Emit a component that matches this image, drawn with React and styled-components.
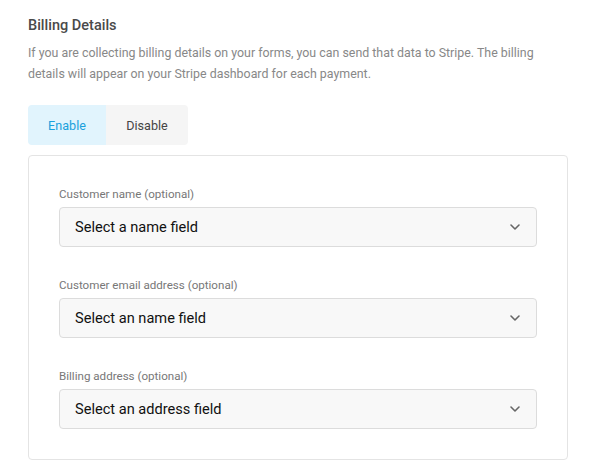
import React, { useState } from 'react'
import styled, { createGlobalStyle } from 'styled-components'

const GlobalStyle = createGlobalStyle`
  body {
    margin: 0;
    background: #fff;
    font-family: Roboto, "Liberation Sans", sans-serif;
  }
`

const Page = styled.div`
  padding: 16px 30px 15px 28px;
  width: 540px;
`

const Title = styled.h3`
  margin: 0;
  font-size: 14.5px;
  font-weight: 500;
  color: #4a4a4a;
  line-height: 20px;
`

const Intro = styled.p`
  margin: 6px 0 0;
  font-size: 12.4px;
  line-height: 21px;
  color: #888;
`

const Tabs = styled.div`
  display: inline-flex;
  margin-top: 21px;
  border-radius: 4px;
  overflow: hidden;
`

const Tab = styled.button`
  height: 40px;
  width: ${p => p.$w}px;
  padding: 0;
  border: 0;
  font-family: inherit;
  font-size: 12.6px;
  background: ${p => (p.$active ? '#e1f4fd' : '#f5f5f5')};
  color: ${p => (p.$active ? '#1aa1dc' : '#444')};
  cursor: pointer;
`

const Card = styled.div`
  margin-top: 10px;
  border: 1px solid #e4e4e4;
  border-radius: 4px;
  padding: 30px 30px 30px;
  display: flex;
  flex-direction: column;
  gap: 30px;
`

const Field = styled.div`
  display: flex;
  flex-direction: column;
`

const Label = styled.label`
  font-size: 11.6px;
  color: #777;
  line-height: 16px;
  margin-bottom: 5px;
`

const Select = styled.div`
  height: 38px;
  border: 1px solid #dcdcdc;
  border-radius: 4px;
  background: #f8f8f8;
  display: flex;
  align-items: center;
  justify-content: space-between;
  padding: 0 15px;
  font-size: 14.6px;
  color: #111;
`

const Chevron = () => (
  <svg width="12" height="12" viewBox="0 0 12 12" fill="none">
    <path d="M2 4l4 4 4-4" stroke="#666" strokeWidth="1.6" strokeLinecap="round" strokeLinejoin="round" />
  </svg>
)

const fields = [
  { label: 'Customer name (optional)', value: 'Select a name field' },
  { label: 'Customer email address (optional)', value: 'Select an name field' },
  { label: 'Billing address (optional)', value: 'Select an address field' },
]

export default function App() {
  const [enabled, setEnabled] = useState(true)
  return (
    <Page>
      <GlobalStyle />
      <Title>Billing Details</Title>
      <Intro>
        If you are collecting billing details on your forms, you can send that data to Stripe. The billing
        details will appear on your Stripe dashboard for each payment.
      </Intro>
      <Tabs>
        <Tab $w={78} $active={enabled} onClick={() => setEnabled(true)}>Enable</Tab>
        <Tab $w={82} $active={!enabled} onClick={() => setEnabled(false)}>Disable</Tab>
      </Tabs>
      <Card>
        {fields.map(f => (
          <Field key={f.label}>
            <Label>{f.label}</Label>
            <Select>
              {f.value}
              <Chevron />
            </Select>
          </Field>
        ))}
      </Card>
    </Page>
  )
}
